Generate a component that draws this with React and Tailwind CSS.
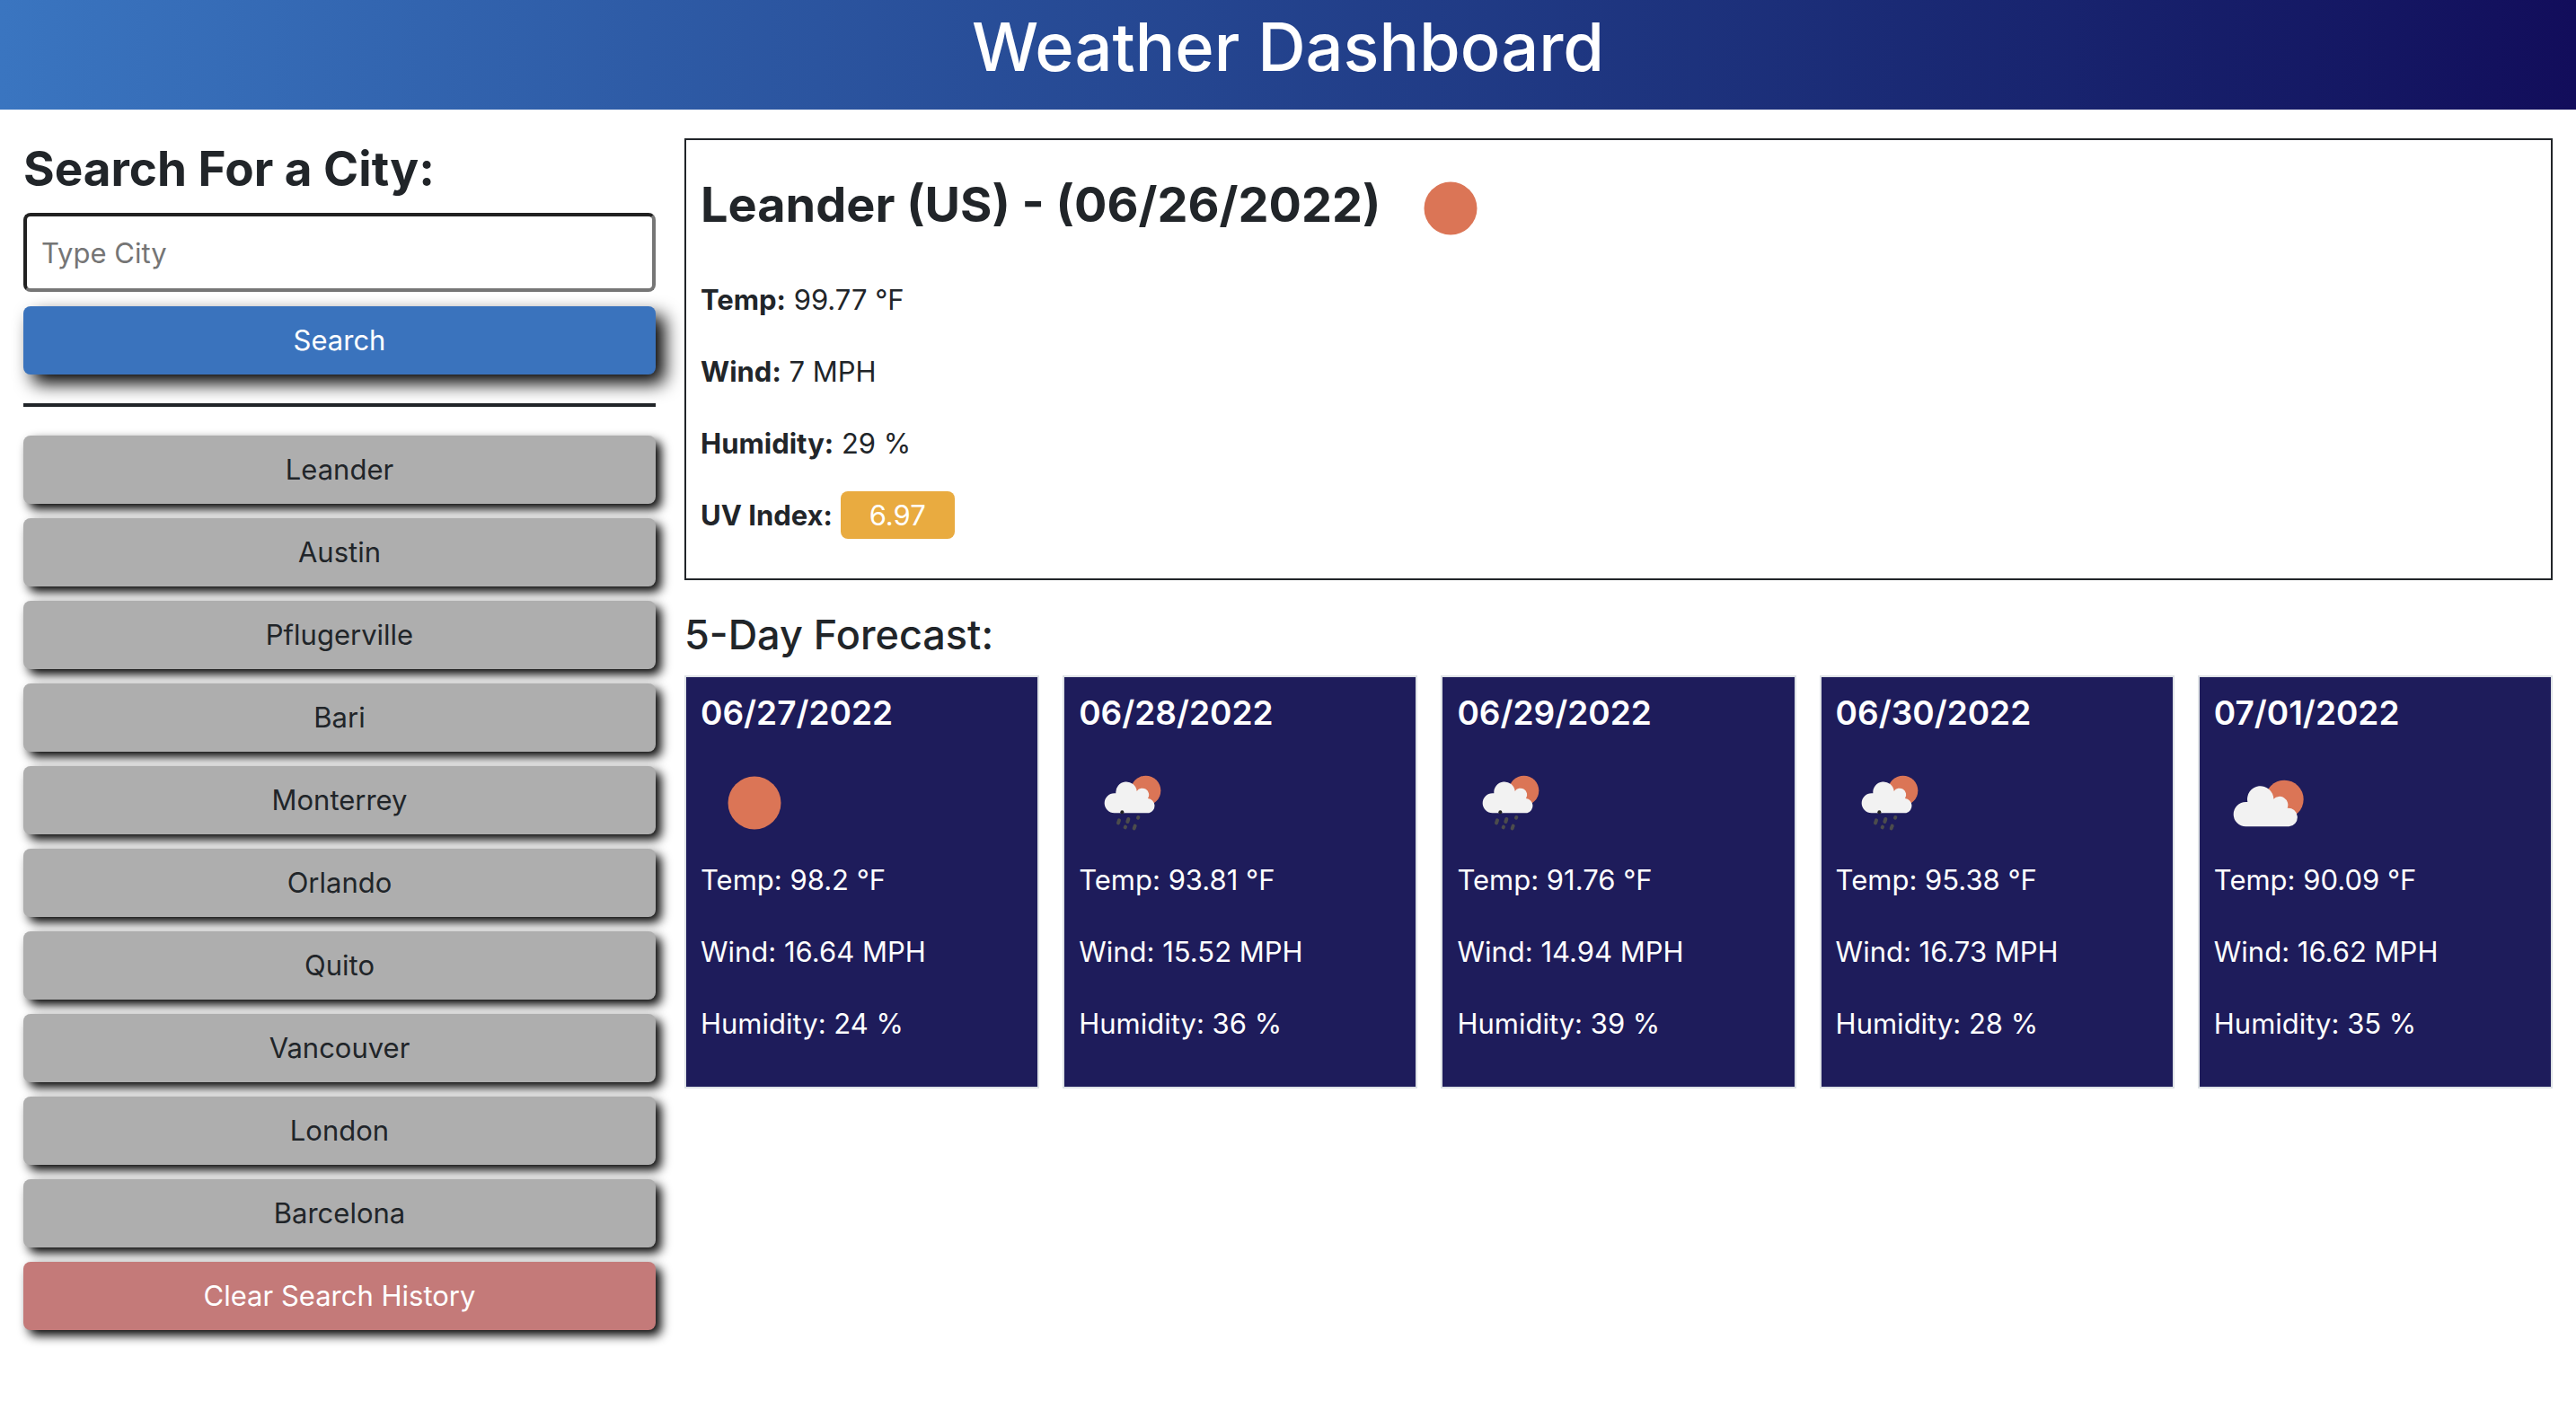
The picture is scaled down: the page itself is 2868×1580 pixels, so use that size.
const CITIES = [
  "Leander",
  "Austin",
  "Pflugerville",
  "Bari",
  "Monterrey",
  "Orlando",
  "Quito",
  "Vancouver",
  "London",
  "Barcelona",
];

const DAYS = [
  { date: "06/27/2022", Icon: SunIcon, temp: "98.2", wind: "16.64", humidity: "24" },
  { date: "06/28/2022", Icon: RainIcon, temp: "93.81", wind: "15.52", humidity: "36" },
  { date: "06/29/2022", Icon: RainIcon, temp: "91.76", wind: "14.94", humidity: "39" },
  { date: "06/30/2022", Icon: RainIcon, temp: "95.38", wind: "16.73", humidity: "28" },
  { date: "07/01/2022", Icon: CloudIcon, temp: "90.09", wind: "16.62", humidity: "35" },
];

function SunIcon() {
  return (
    <svg viewBox="0 0 100 100" className="size-[100px] shrink-0" aria-label="Clear sky" role="img">
      <circle cx="50" cy="50" r="29.5" fill="#db7556" />
    </svg>
  );
}

function RainIcon() {
  return (
    <svg viewBox="93 12 300 300" className="size-[100px] shrink-0" aria-label="Rain" role="img">
      <circle cx="287" cy="121" r="50" fill="#db7556" />
      <path
        d="M182 196 A33 33 0 0 1 182 130 L187 130 A35 35 0 1 1 257 123 A22 22 0 0 1 294 147 A25 25 0 0 1 298 196 Z"
        fill="#f2f2f2"
      />
      <circle cx="208" cy="193" r="6" fill="#222222" />
      <g stroke="#4c4c4c" strokeWidth="12" strokeLinecap="round">
        <path d="M198 220 L195 229" />
        <path d="M229 216 L226 225" />
        <path d="M262 210 L261 212" />
        <path d="M219 242 L218 244" />
        <path d="M251 239 L248 247" />
      </g>
    </svg>
  );
}

function CloudIcon() {
  return (
    <svg viewBox="45 12 300 300" className="size-[100px] shrink-0" aria-label="Few clouds" role="img">
      <circle cx="250" cy="150" r="64" fill="#db7556" />
      <path
        d="M121 241 A41 41 0 0 1 121 159 L127 159 A44 44 0 1 1 214 149 A28 28 0 0 1 260 179 A31 31 0 0 1 265 241 Z"
        fill="#f2f2f2"
      />
    </svg>
  );
}

function Stat({ label, children }) {
  return (
    <p>
      <strong className="font-bold">{label}:</strong> {children}
    </p>
  );
}

export default function App() {
  return (
    <div className='min-h-screen bg-white font-["Inter","Liberation_Sans",sans-serif] text-[31px] leading-[48px] text-[#212529]'>
      <header className="bg-linear-to-r from-[#3a75c0] to-[#120d5b] pt-1 pb-[22px] text-center text-white">
        <h1 className="text-[74px] leading-[96px] font-medium">Weather Dashboard</h1>
      </header>

      <div className="flex gap-8 px-[26px] pt-8">
        <aside className="w-1/4 max-w-[704px] shrink-0">
          <form onSubmit={(e) => e.preventDefault()}>
            <label htmlFor="city" className="block text-[53px] leading-[68px] font-bold">
              Search For a City:
            </label>
            <input
              id="city"
              type="text"
              placeholder="Type City"
              className="mt-[15px] block h-22 w-full rounded-lg border-4 border-t-[#212121] border-r-[#767676] border-b-[#767676] border-l-[#212121] bg-white px-4 placeholder:text-[#757575]"
            />
            <button
              type="submit"
              className="mt-4 block w-full rounded-lg bg-[#3a73bd] py-3.5 text-white shadow-[10px_10px_20px_#000]"
            >
              Search
            </button>
          </form>
          <hr className="my-8 border-t-4 border-[#212529]" />
          <div className="flex flex-col gap-4">
            {CITIES.map((city) => (
              <button
                key={city}
                type="button"
                className="w-full rounded-lg bg-[#aeaeae] py-3.5 shadow-[6px_6px_12px_#000]"
              >
                {city}
              </button>
            ))}
            <button
              type="button"
              className="w-full rounded-lg bg-[#c47a79] py-3.5 text-white shadow-[6px_6px_12px_#000]"
            >
              Clear Search History
            </button>
          </div>
        </aside>

        <main className="min-w-0 flex-1">
          <section className="border-2 border-[#212529] px-4 pt-[26px] pb-[46px]">
            <div className="flex items-center gap-7">
              <h2 className="pb-2 text-[54px] leading-[68px] font-bold">Leander (US) - (06/26/2022)</h2>
              <SunIcon />
            </div>
            <div className="mt-7 flex flex-col gap-8">
              <Stat label="Temp">99.77 °F</Stat>
              <Stat label="Wind">7 MPH</Stat>
              <Stat label="Humidity">29 %</Stat>
              <Stat label="UV Index">
                <span className="rounded-lg bg-[#e9ab40] px-8 py-2 text-white">6.97</span>
              </Stat>
            </div>
          </section>

          <section>
            <h3 className="mt-8 text-[45px] leading-[58px] font-medium">5-Day Forecast:</h3>
            <div className="mt-4 grid grid-cols-5 gap-[26px]">
              {DAYS.map(({ date, Icon, temp, wind, humidity }) => (
                <article key={date} className="border-2 border-[#dee2e6] bg-[#1e1c5b] px-4 pt-4 pb-[46px] text-white">
                  <h4 className="text-[37px] leading-[48px] font-semibold">{date}</h4>
                  <div className="mt-[26px] mb-3 ml-2.5">
                    <Icon />
                  </div>
                  <div className="flex flex-col gap-8">
                    <p>Temp: {temp} °F</p>
                    <p>Wind: {wind} MPH</p>
                    <p>Humidity: {humidity} %</p>
                  </div>
                </article>
              ))}
            </div>
          </section>
        </main>
      </div>
    </div>
  );
}
